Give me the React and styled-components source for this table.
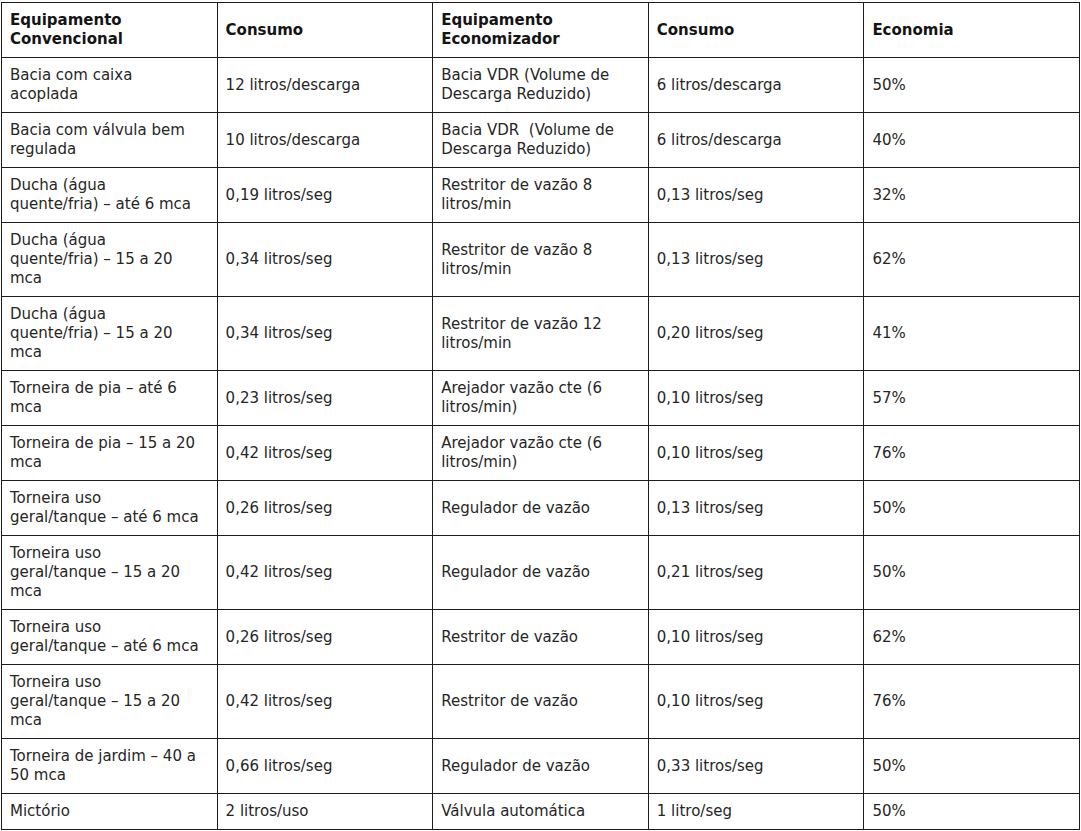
import React from "react";
import styled, { createGlobalStyle } from "styled-components";

const GlobalStyle = createGlobalStyle`
  body {
    margin: 0;
    background: #fff;
    font-family: "DejaVu Sans", "Liberation Sans", sans-serif;
    color: #262626;
  }
`;

const Page = styled.div`
  padding: 2px 2px 0 1px;
`;

const Table = styled.table`
  width: 1079px;
  border-collapse: collapse;
  table-layout: fixed;
  font-size: 15px;
  line-height: 19px;
`;

const HeadCell = styled.th`
  border: 1px solid #1c1c1c;
  padding: 8px;
  text-align: left;
  vertical-align: middle;
  font-weight: 700;
  color: #141414;
  white-space: pre;
`;

const Cell = styled.td`
  border: 1px solid #1c1c1c;
  padding: 8px;
  vertical-align: middle;
  white-space: pre;
`;

const headers = [
  "Equipamento\nConvencional",
  "Consumo",
  "Equipamento\nEconomizador",
  "Consumo",
  "Economia",
];

const rows = [
  ["Bacia com caixa\nacoplada", "12 litros/descarga", "Bacia VDR (Volume de\nDescarga Reduzido)", "6 litros/descarga", "50%"],
  ["Bacia com válvula bem\nregulada", "10 litros/descarga", "Bacia VDR  (Volume de\nDescarga Reduzido)", "6 litros/descarga", "40%"],
  ["Ducha (água\nquente/fria) – até 6 mca", "0,19 litros/seg", "Restritor de vazão 8\nlitros/min", "0,13 litros/seg", "32%"],
  ["Ducha (água\nquente/fria) – 15 a 20\nmca", "0,34 litros/seg", "Restritor de vazão 8\nlitros/min", "0,13 litros/seg", "62%"],
  ["Ducha (água\nquente/fria) – 15 a 20\nmca", "0,34 litros/seg", "Restritor de vazão 12\nlitros/min", "0,20 litros/seg", "41%"],
  ["Torneira de pia – até 6\nmca", "0,23 litros/seg", "Arejador vazão cte (6\nlitros/min)", "0,10 litros/seg", "57%"],
  ["Torneira de pia – 15 a 20\nmca", "0,42 litros/seg", "Arejador vazão cte (6\nlitros/min)", "0,10 litros/seg", "76%"],
  ["Torneira uso\ngeral/tanque – até 6 mca", "0,26 litros/seg", "Regulador de vazão", "0,13 litros/seg", "50%"],
  ["Torneira uso\ngeral/tanque – 15 a 20\nmca", "0,42 litros/seg", "Regulador de vazão", "0,21 litros/seg", "50%"],
  ["Torneira uso\ngeral/tanque – até 6 mca", "0,26 litros/seg", "Restritor de vazão", "0,10 litros/seg", "62%"],
  ["Torneira uso\ngeral/tanque – 15 a 20\nmca", "0,42 litros/seg", "Restritor de vazão", "0,10 litros/seg", "76%"],
  ["Torneira de jardim – 40 a\n50 mca", "0,66 litros/seg", "Regulador de vazão", "0,33 litros/seg", "50%"],
  ["Mictório", "2 litros/uso", "Válvula automática", "1 litro/seg", "50%"],
];

export default function App() {
  return (
    <Page>
      <GlobalStyle />
      <Table>
        <thead>
          <tr>
            {headers.map((h, i) => (
              <HeadCell key={i}>{h}</HeadCell>
            ))}
          </tr>
        </thead>
        <tbody>
          {rows.map((row, r) => (
            <tr key={r}>
              {row.map((text, c) => (
                <Cell key={c}>{text}</Cell>
              ))}
            </tr>
          ))}
        </tbody>
      </Table>
    </Page>
  );
}
